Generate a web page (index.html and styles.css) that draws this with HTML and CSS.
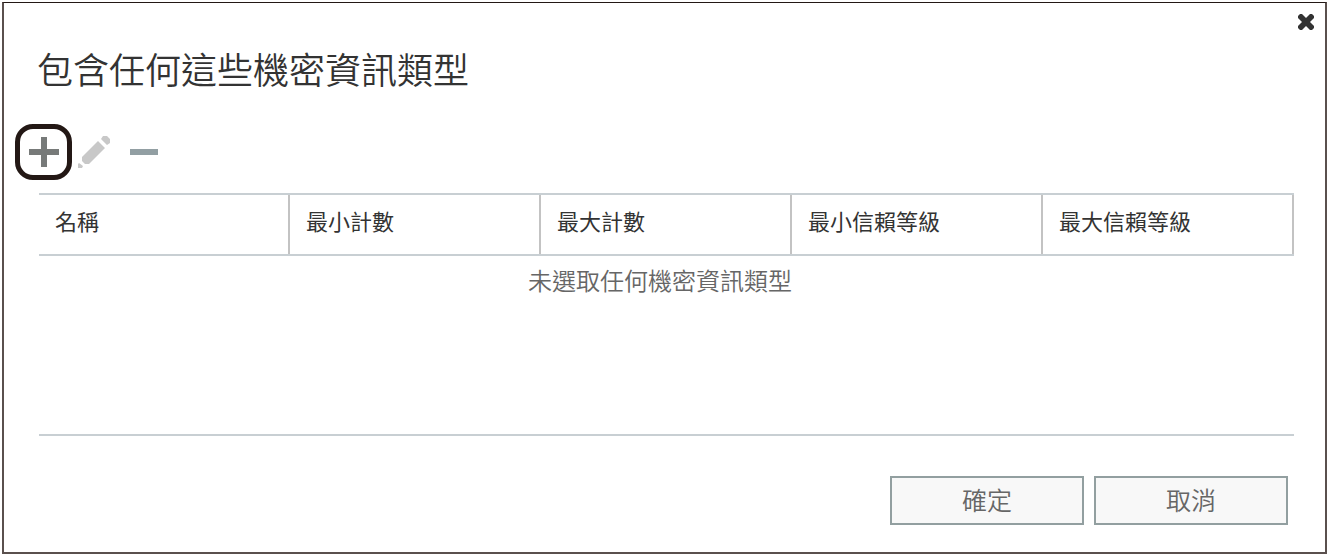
FILE: index.html
```
<!DOCTYPE html>
<html lang="zh-Hant">
<head>
  <meta charset="UTF-8">
  <meta name="viewport" content="width=device-width, initial-scale=1.0">
  <title>包含任何這些機密資訊類型</title>
  <link rel="stylesheet" href="styles.css">
</head>
<body>
  <main class="dialog" role="dialog" aria-labelledby="dialogTitle">
    <header class="dialog-header">
      <h1 id="dialogTitle">包含任何這些機密資訊類型</h1>
      <button type="button" class="close-button" aria-label="關閉">
        <svg width="16" height="16" viewBox="0 0 16 16">
          <path d="M0 2l2-2h2l4 4 4-4h2l2 2v2l-4 4 4 4v2l-2 2h-2l-4-4-4 4H2l-2-2v-2l4-4-4-4z" fill="#333"/>
        </svg>
      </button>
    </header>

    <!-- Toolbar -->
    <div class="toolbar">
      <button type="button" class="tool-button highlighted" aria-label="新增">
        <svg width="30" height="30" viewBox="0 0 30 30">
          <path d="M12 0h6v12h12v6H18v12h-6V18H0v-6h12z" fill="#777a79"/>
        </svg>
      </button>
      <button type="button" class="tool-button" aria-label="編輯">
        <svg width="32" height="32" viewBox="0 0 32 32">
          <path d="M20 5l7 7-16 16H7l-3-3v-4zM23 3l2-3h4l3 3v4l-3 2zM1 27l4 3-1 2H0v-4z" fill="#c8c8c8"/>
        </svg>
      </button>
      <button type="button" class="tool-button remove-button" aria-label="移除">
        <svg width="28" height="6" viewBox="0 0 28 6">
          <path d="M0 0h28v6H0z" fill="#929fa3"/>
        </svg>
      </button>
    </div>

    <!-- Sensitive information types -->
    <div class="type-list">
      <table>
        <thead>
          <tr>
            <th scope="col">名稱</th>
            <th scope="col">最小計數</th>
            <th scope="col">最大計數</th>
            <th scope="col">最小信賴等級</th>
            <th scope="col">最大信賴等級</th>
          </tr>
        </thead>
        <tbody>
          <tr>
            <td colspan="5">未選取任何機密資訊類型</td>
          </tr>
        </tbody>
      </table>
    </div>

    <footer class="dialog-footer">
      <button type="button">確定</button>
      <button type="button">取消</button>
    </footer>
  </main>
</body>
</html>
```
FILE: styles.css
```
* {
  box-sizing: border-box;
}
body {
  font-family: "Noto Sans CJK TC", sans-serif;
  margin: 0;
  background: white;
  color: #333;
}
button {
  font-family: inherit;
  cursor: pointer;
}

/* Dialog */
.dialog {
  display: flex;
  flex-direction: column;
  min-height: calc(100vh - 6px);
  margin: 2px 3px 4px 2px;
  border: 2px solid #5a504e;
  border-top: 1px solid #231815;
}
.dialog-header {
  display: flex;
  justify-content: space-between;
  align-items: flex-start;
  padding: 11px 11px 0 33px;
}
.dialog-header h1 {
  margin: 34px 0 0;
  font-size: 36px;
  font-weight: 350;
  line-height: 40px;
}
.close-button {
  display: flex;
  padding: 0;
  border: none;
  background: none;
}

/* Toolbar */
.toolbar {
  display: flex;
  align-items: center;
  padding: 36px 11px 13px;
}
.tool-button {
  display: flex;
  align-items: center;
  justify-content: center;
  padding: 0;
  border: none;
  background: none;
}
.tool-button.highlighted {
  width: 57px;
  height: 56px;
  margin-right: 6px;
  border: 5px solid #231815;
  border-radius: 18px;
}
.remove-button {
  margin-left: 20px;
}

/* List */
.type-list {
  flex: 1;
  margin: 0 31px 0 35px;
  border-bottom: 2px solid #c8cfd3;
}
table {
  width: 100%;
  table-layout: fixed;
  border-spacing: 0;
}
th {
  padding: 13px 16px 22px;
  border-top: 2px solid #c8cfd3;
  border-bottom: 2px solid #c8cfd3;
  background: linear-gradient(#c3c3c3, #c3c3c3) right / 2px 100% no-repeat;
  font-size: 22px;
  font-weight: 400;
  line-height: 24px;
  text-align: left;
}
td {
  padding: 10px 13px 10px 0;
  color: #666;
  font-size: 24px;
  font-weight: 350;
  line-height: 28px;
  text-align: center;
}

/* Footer */
.dialog-footer {
  display: flex;
  justify-content: flex-end;
  gap: 10px;
  padding: 40px 37px 27px;
}
.dialog-footer button {
  width: 194px;
  height: 49px;
  padding: 0 0 4px;
  border: 2px solid #929fa0;
  background: #f8f8f8;
  color: #666;
  font-size: 25px;
  font-weight: 350;
}
```
